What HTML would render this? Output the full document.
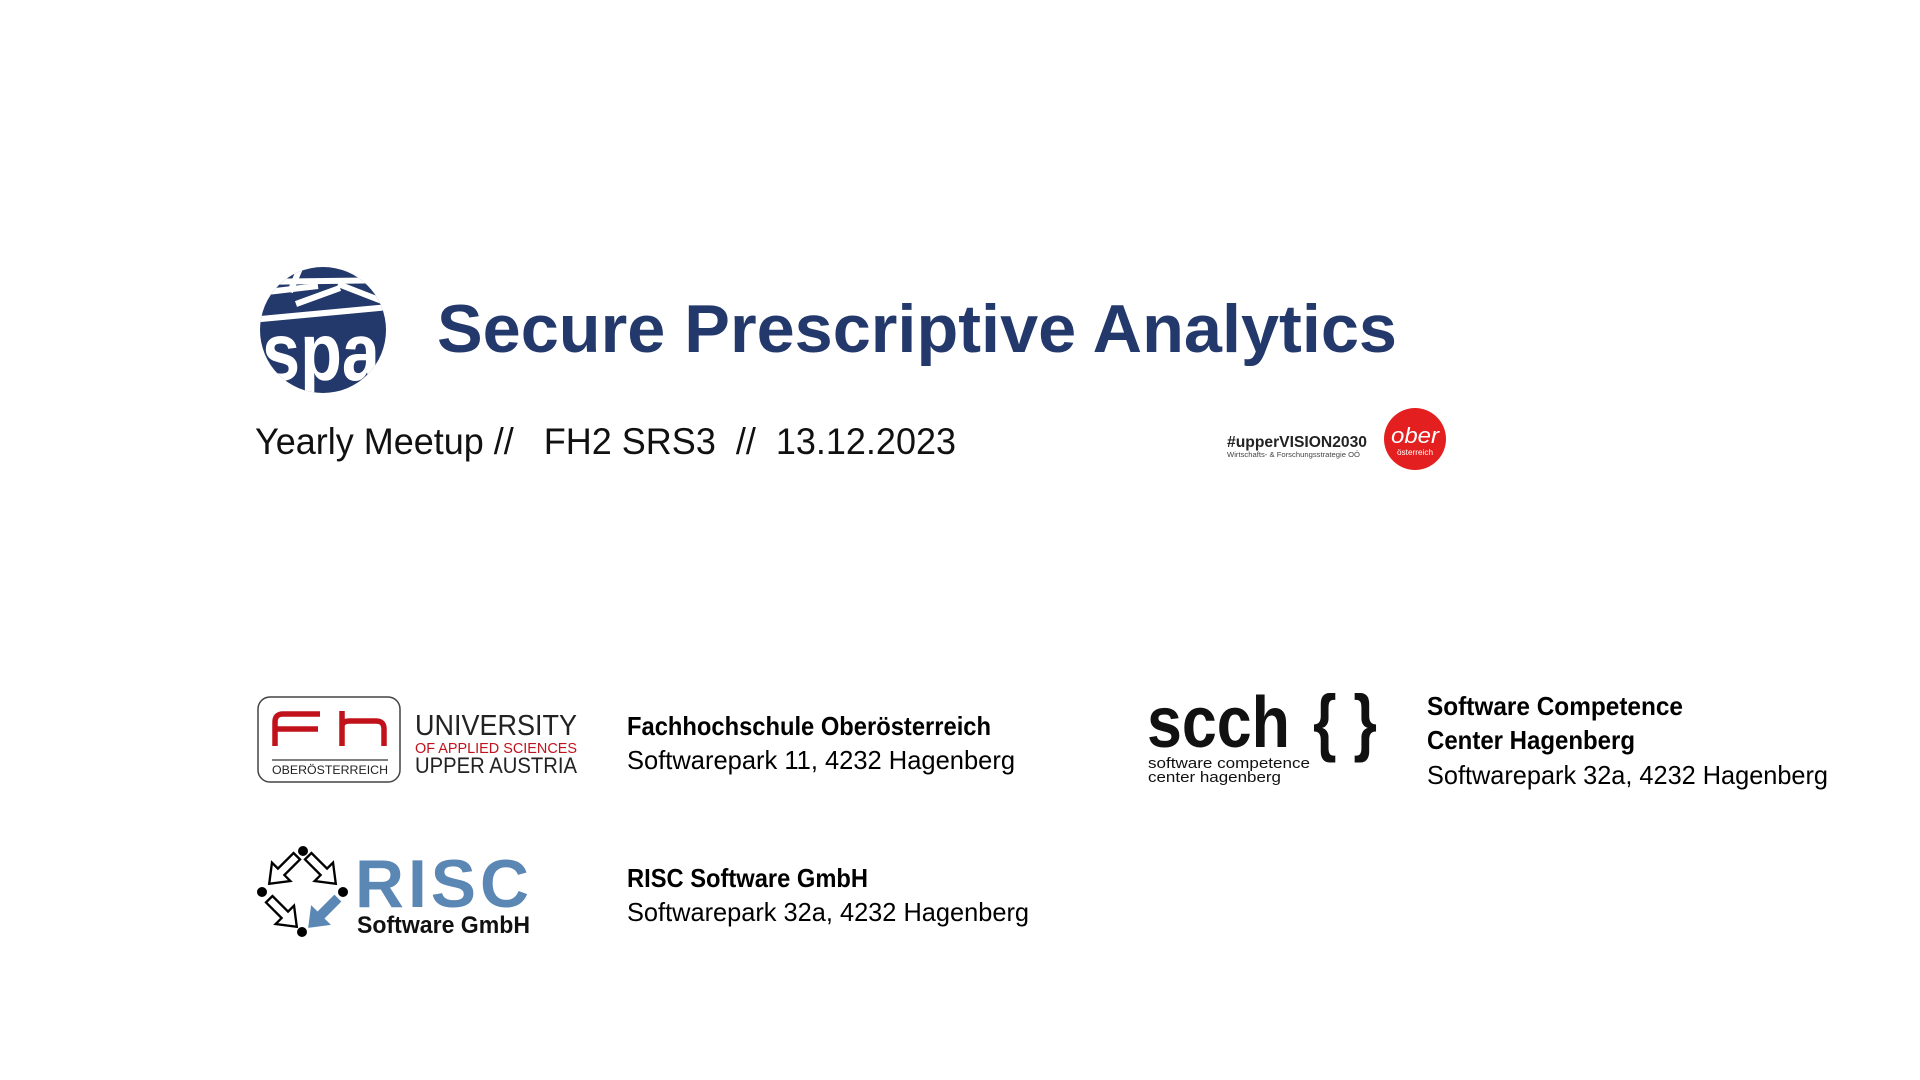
<!DOCTYPE html>
<html><head><meta charset="utf-8"><style>
html,body{margin:0;padding:0;background:#fff;width:1920px;height:1080px;overflow:hidden}
svg{display:block}
text{font-family:"Liberation Sans",sans-serif}
</style></head><body>
<svg width="1920" height="1080" viewBox="0 0 1920 1080" xmlns="http://www.w3.org/2000/svg">
<defs>
<clipPath id="c"><circle cx="323" cy="330" r="63"/></clipPath>
<path id="ar" d="M-15,-3.5 L2,-3.5 L2,-10 L15,0 L2,10 L2,3.5 L-15,3.5 Z"/>
</defs>
<!-- spa logo -->
<g clip-path="url(#c)">
<rect x="255" y="260" width="140" height="140" fill="#24396b"/>
<g stroke="#fff" stroke-width="6" fill="none">
<line x1="250" y1="294" x2="318" y2="286"/>
<line x1="306" y1="254" x2="290" y2="292"/>
<line x1="296" y1="304" x2="340" y2="288"/>
<line x1="338" y1="284" x2="400" y2="308"/>
<line x1="250" y1="320" x2="400" y2="306"/>
<line x1="250" y1="282" x2="400" y2="280"/>
</g>
<text x="262" y="380" font-size="82" font-weight="bold" fill="#fff" textLength="118" lengthAdjust="spacingAndGlyphs">spa</text>
</g>
<!-- title -->
<text x="437" y="352" font-size="68" font-weight="bold" fill="#24396b" textLength="960" lengthAdjust="spacingAndGlyphs">Secure Prescriptive Analytics</text>
<text x="255" y="454" font-size="37" fill="#111" textLength="701" lengthAdjust="spacingAndGlyphs" xml:space="preserve">Yearly Meetup //   FH2 SRS3  //  13.12.2023</text>
<!-- upper vision -->
<text x="1227" y="447" font-size="16" font-weight="bold" fill="#222" textLength="140" lengthAdjust="spacingAndGlyphs">#upperVISION2030</text>
<text x="1227" y="457" font-size="7" fill="#444" textLength="133" lengthAdjust="spacingAndGlyphs">Wirtschafts- &amp; Forschungsstrategie OÖ</text>
<circle cx="1415" cy="439" r="31" fill="#e3201f"/>
<text x="1391" y="443" font-size="22" font-style="italic" fill="#fff" font-family="Liberation Serif,serif" textLength="48" lengthAdjust="spacingAndGlyphs">ober</text>
<text x="1397" y="455" font-size="8" fill="#fff" textLength="36" lengthAdjust="spacingAndGlyphs">österreich</text>
<!-- fh logo -->
<rect x="258" y="697" width="142" height="85" rx="12" fill="none" stroke="#444" stroke-width="1.5"/>
<g stroke="#c1121c" stroke-width="5.5" fill="none">
<path d="M275,746 V722 Q275,714 283,714 H320"/>
<line x1="275" y1="729" x2="318" y2="729"/>
<path d="M342,711 V746 M342,726 Q342,721 350,721 H376 Q384,721 384,729 V746"/>
</g>
<line x1="272" y1="760" x2="388" y2="760" stroke="#555" stroke-width="1.5"/>
<text x="272" y="774" font-size="12" fill="#222" textLength="116" lengthAdjust="spacingAndGlyphs">OBERÖSTERREICH</text>
<text x="415" y="735" font-size="29" fill="#222" textLength="162" lengthAdjust="spacingAndGlyphs">UNIVERSITY</text>
<text x="415" y="753" font-size="15" fill="#c1121c" textLength="162" lengthAdjust="spacingAndGlyphs">OF APPLIED SCIENCES</text>
<text x="415" y="773" font-size="22" fill="#222" textLength="162" lengthAdjust="spacingAndGlyphs">UPPER AUSTRIA</text>
<!-- RISC logo -->
<g fill="#000">
<circle cx="303" cy="851" r="5"/><circle cx="262" cy="892" r="5"/><circle cx="343" cy="892" r="5"/><circle cx="302" cy="932" r="5"/>
</g>
<g fill="#fff" stroke="#000" stroke-width="1.8">
<use href="#ar" transform="translate(283,870) rotate(135) scale(1.3)"/>
<use href="#ar" transform="translate(322,870) rotate(45) scale(1.3)"/>
<use href="#ar" transform="translate(283,913) rotate(45) scale(1.3)"/>
</g>
<use href="#ar" fill="#5a87b4" transform="translate(323,913) rotate(135) scale(1.4)"/>
<text x="355" y="907" font-size="68" font-weight="bold" fill="#5a87b4" textLength="178" lengthAdjust="spacingAndGlyphs" letter-spacing="4">RISC</text>
<text x="357" y="933" font-size="24" font-weight="bold" fill="#111" textLength="173" lengthAdjust="spacingAndGlyphs">Software GmbH</text>
<!-- scch logo -->
<text x="1147" y="747" font-size="72" font-weight="bold" fill="#111" textLength="143" lengthAdjust="spacingAndGlyphs">scch</text>
<text x="1313" y="747" font-size="74" font-weight="bold" fill="#111" textLength="64" lengthAdjust="spacingAndGlyphs" xml:space="preserve">{ }</text>
<text x="1148" y="768" font-size="15" fill="#111" textLength="162" lengthAdjust="spacingAndGlyphs">software competence</text>
<text x="1148" y="782" font-size="15" fill="#111" textLength="133" lengthAdjust="spacingAndGlyphs">center hagenberg</text>
<!-- address texts -->
<g font-size="26" fill="#000">
<text x="627" y="735" font-weight="bold" textLength="364" lengthAdjust="spacingAndGlyphs">Fachhochschule Oberösterreich</text>
<text x="627" y="769" textLength="388" lengthAdjust="spacingAndGlyphs">Softwarepark 11, 4232 Hagenberg</text>
<text x="627" y="887" font-weight="bold" textLength="241" lengthAdjust="spacingAndGlyphs">RISC Software GmbH</text>
<text x="627" y="921" textLength="402" lengthAdjust="spacingAndGlyphs">Softwarepark 32a, 4232 Hagenberg</text>
<text x="1427" y="715" font-weight="bold" textLength="256" lengthAdjust="spacingAndGlyphs">Software Competence</text>
<text x="1427" y="749" font-weight="bold" textLength="208" lengthAdjust="spacingAndGlyphs">Center Hagenberg</text>
<text x="1427" y="784" textLength="401" lengthAdjust="spacingAndGlyphs">Softwarepark 32a, 4232 Hagenberg</text>
</g>
</svg>
</body></html>
